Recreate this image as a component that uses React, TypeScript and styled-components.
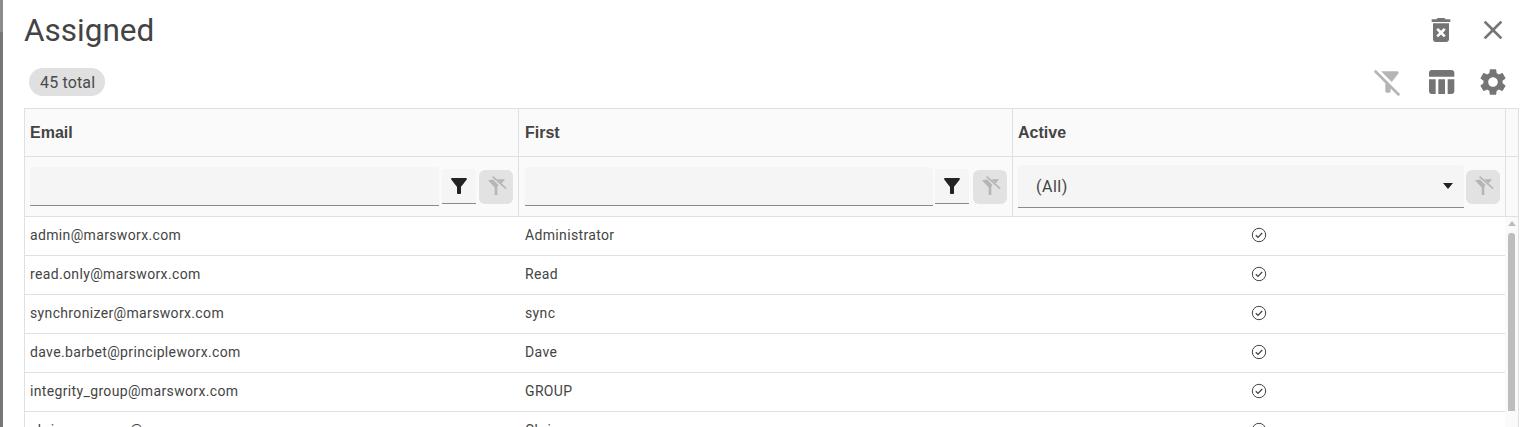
import { createGlobalStyle, styled } from 'styled-components'

const GlobalStyle = createGlobalStyle`
  html, body {
    margin: 0;
    padding: 0;
    height: 427px;
    overflow: hidden;
    background: #fff;
    font-family: Roboto, "Liberation Sans", sans-serif;
  }
`

const Backdrop = styled.div`
  height: 427px;
  padding: 0 27px 0 24px;
  overflow: hidden;
  box-sizing: border-box;
  background: linear-gradient(#8d8d8d 32px, #777 32px) left top / 3px 100% no-repeat, #fff;
`

const TitleRow = styled.div`
  display: flex;
  align-items: center;
  justify-content: space-between;
  height: 60px;
`

const Title = styled.h1`
  margin: 0;
  font-size: 31.5px;
  font-weight: 400;
  color: #444;
`

const ToolRow = styled.div`
  display: flex;
  align-items: center;
  justify-content: space-between;
  height: 48px;
  padding: 0 0 4px 5px;
  box-sizing: border-box;
`

const Chip = styled.span`
  display: inline-flex;
  align-items: center;
  height: 28px;
  padding: 0 10px 0 11px;
  border-radius: 14px;
  background: #e0e0e0;
  color: #4a4a4a;
  font-size: 16px;
  letter-spacing: 0.15px;
`

const Icons = styled.div`
  display: flex;
  align-items: center;
  gap: 20.5px;
`

const Icon = styled.svg<{ $size?: number; $color?: string }>`
  display: block;
  width: ${p => p.$size ?? 32}px;
  height: ${p => p.$size ?? 32}px;
  fill: ${p => p.$color ?? '#757575'};
`

const Table = styled.div`
  border: 1px solid #e0e0e0;
  border-bottom: 0;
  width: 1495px;
  box-sizing: border-box;
`

const Row = styled.div`
  display: grid;
  grid-template-columns: 494px 494px 493px 1fr;
`

const HeadCell = styled.div`
  height: 47px;
  display: flex;
  align-items: center;
  padding-left: 5px;
  background: #fafafa;
  border-right: 1px solid #e0e0e0;
  border-bottom: 1px solid #e0e0e0;
  font-size: 16px;
  font-weight: 700;
  color: #444;
  font-family: "Liberation Sans", Arial, sans-serif;

  &:nth-child(2) {
    padding-left: 6px;
  }
`

const Input = styled.div`
  flex: 1;
  height: 38px;
  background: #f5f5f5;
  border-bottom: 1px solid #8a8a8a;
  border-radius: 4px 4px 0 0;
`

const FilterButton = styled.div`
  width: 34px;
  height: 34px;
  display: flex;
  align-items: center;
  justify-content: center;
  background: #f5f5f5;
  border-bottom: 1px solid #8a8a8a;
  border-radius: 4px 4px 0 0;
`

const ClearButton = styled.div`
  width: 34px;
  height: 34px;
  display: flex;
  align-items: center;
  justify-content: center;
  background: #e2e2e2;
  border-radius: 6px;
`

const FilterCell = styled.div`
  height: 59px;
  display: flex;
  align-items: center;
  gap: 3px;
  padding: 0 5px;
  background: #fafafa;
  border-right: 1px solid #e0e0e0;
  border-bottom: 1px solid #e0e0e0;

  &:nth-child(2) {
    padding-left: 6px;
  }

  &:nth-child(2) ${FilterButton} {
    margin: 0 1px 0 -1px;
  }
`

const Gutter = styled.div<{ $h: number }>`
  height: ${p => p.$h}px;
  background: #fafafa;
  border-bottom: 1px solid #e0e0e0;
`

const Select = styled.div`
  flex: 1;
  height: 42px;
  display: flex;
  align-items: center;
  justify-content: space-between;
  margin-right: -1px;
  padding: 0 11px 0 18px;
  background: #f5f5f5;
  border-bottom: 1px solid #8a8a8a;
  border-radius: 4px 4px 0 0;
  font-size: 16px;
  letter-spacing: 0.5px;
  color: #444;
`

const Caret = styled.span`
  width: 0;
  height: 0;
  border-left: 5px solid transparent;
  border-right: 5px solid transparent;
  border-top: 6px solid #222;
`

const Body = styled.div`
  display: grid;
  grid-template-columns: 1480px 1fr;
`

const DataRow = styled.div`
  display: grid;
  grid-template-columns: 494px 494px 492px;
  height: 36px;
  padding-bottom: 2px;
  border-bottom: 1px solid #e0e0e0;
  align-items: center;
  font-size: 14px;
  color: #444;
  letter-spacing: 0.35px;
`

const DataCell = styled.div`
  padding-left: 5px;

  &:nth-child(2) {
    padding-left: 6px;
  }
`

const StatusCell = styled.div`
  display: flex;
  justify-content: center;
`

const Track = styled.div`
  background: #fafafa;
  display: flex;
  flex-direction: column;
  align-items: center;
  padding-top: 4px;
`

const ArrowUp = styled.span`
  width: 0;
  height: 0;
  border-left: 4px solid transparent;
  border-right: 4px solid transparent;
  border-bottom: 5px solid #bdbdbd;
`

const Thumb = styled.div`
  width: 7px;
  height: 178px;
  margin-top: 7px;
  background: #bdbdbd;
  border-radius: 3px 3px 0 0;
`

const filterOff =
  'M19.79 5.61C20.3 4.95 19.83 4 19 4H6.83l7.97 7.97 4.99-6.36zM2.81 2.81 1.39 4.22 10 13v6c0 .55.45 1 1 1h2c.55 0 1-.45 1-1v-2.17l5.78 5.78 1.41-1.41L2.81 2.81z'
const filterOn =
  'M4.25 5.61C6.27 8.2 10 13 10 13v6c0 .55.45 1 1 1h2c.55 0 1-.45 1-1v-6s3.72-4.8 5.74-7.39c.51-.66.04-1.61-.79-1.61H5.04c-.83 0-1.3.95-.79 1.61z'

const ClearIcon = () => (
  <svg width="24" height="24" viewBox="0 0 24 24" fill="#b5b5b5">
    <path d="M4 5.2l5-.7 5.5 5.5-1.2 1.6V20h-2.6v-7.6z" />
    <path d="M13.2 4.2H21l-3.4 4.4z" />
    <path d="M8.6 1.6l13.6 12" stroke="#b5b5b5" strokeWidth="1.5" fill="none" />
  </svg>
)

const FilterButtonIcon = () => (
  <Icon viewBox="0 0 24 24" $size={24} $color="#222">
    <path d={filterOn} />
  </Icon>
)

const CheckCircle = () => (
  <svg width="16" height="16" viewBox="0 0 16 16" fill="none" stroke="#444" strokeWidth="1">
    <circle cx="8" cy="8" r="6.7" />
    <path d="M4.8 8.2l2.2 2.2 4.2-4.4" strokeWidth="1.3" />
  </svg>
)

const rows = [
  ['admin@marsworx.com', 'Administrator'],
  ['read.only@marsworx.com', 'Read'],
  ['synchronizer@marsworx.com', 'sync'],
  ['dave.barbet@principleworx.com', 'Dave'],
  ['integrity_group@marsworx.com', 'GROUP'],
  ['chris.mcgowan@marsworx.com', 'Chris'],
]

export default function App() {
  return (
    <>
      <GlobalStyle />
      <Backdrop>
        <TitleRow>
          <Title>Assigned</Title>
          <Icons>
            <Icon viewBox="0 0 24 24">
              <path d="M6 19c0 1.1.9 2 2 2h8c1.1 0 2-.9 2-2V7H6v12zm2.46-7.12l1.41-1.41L12 12.59l2.12-2.12 1.41 1.41L13.41 14l2.12 2.12-1.41 1.41L12 15.41l-2.12 2.12-1.41-1.41L10.59 14l-2.13-2.12zM15.5 4l-1-1h-5l-1 1H5v2h14V4z" />
            </Icon>
            <Icon viewBox="0 0 24 24">
              <path d="M19 6.41L17.59 5 12 10.59 6.41 5 5 6.41 10.59 12 5 17.59 6.41 19 12 13.41 17.59 19 19 17.59 13.41 12z" />
            </Icon>
          </Icons>
        </TitleRow>
        <ToolRow>
          <Chip>45 total</Chip>
          <Icons>
            <Icon viewBox="0 0 24 24" $color="#b5b5b5">
              <path d={filterOff} />
            </Icon>
            <Icon viewBox="0 0 24 24">
              <path d="M10 10.02h5V21h-5zM17 21h3c1.1 0 2-.9 2-2v-9h-5v11zm3-18H5c-1.1 0-2 .9-2 2v3h19V5c0-1.1-.9-2-2-2zM3 19c0 1.1.9 2 2 2h3V10H3v9z" />
            </Icon>
            <Icon viewBox="0 0 24 24">
              <path d="M19.14,12.94c0.04-0.3,0.06-0.61,0.06-0.94c0-0.32-0.02-0.64-0.07-0.94l2.03-1.58c0.18-0.14,0.23-0.41,0.12-0.61 l-1.92-3.32c-0.12-0.22-0.37-0.29-0.59-0.22l-2.39,0.96c-0.5-0.38-1.03-0.7-1.62-0.94L14.4,2.81c-0.04-0.24-0.24-0.41-0.48-0.41 h-3.84c-0.24,0-0.43,0.17-0.47,0.41L9.25,5.35C8.66,5.59,8.12,5.92,7.63,6.29L5.24,5.33c-0.22-0.08-0.47,0-0.59,0.22L2.74,8.87 C2.62,9.08,2.66,9.34,2.86,9.48l2.03,1.58C4.84,11.36,4.8,11.69,4.8,12s0.02,0.64,0.07,0.94l-2.03,1.58 c-0.18,0.14-0.23,0.41-0.12,0.61l1.92,3.32c0.12,0.22,0.37,0.29,0.59,0.22l2.39-0.96c0.5,0.38,1.03,0.7,1.62,0.94l0.36,2.54 c0.05,0.24,0.24,0.41,0.48,0.41h3.84c0.24,0,0.44-0.17,0.47-0.41l0.36-2.54c0.59-0.24,1.13-0.56,1.62-0.94l2.39,0.96 c0.22,0.08,0.47,0,0.59-0.22l1.92-3.32c0.12-0.22,0.07-0.47-0.12-0.61L19.14,12.94z M12,15.6c-1.98,0-3.6-1.62-3.6-3.6 s1.62-3.6,3.6-3.6s3.6,1.62,3.6,3.6S13.98,15.6,12,15.6z" />
            </Icon>
          </Icons>
        </ToolRow>
        <Table>
          <Row>
            <HeadCell>Email</HeadCell>
            <HeadCell>First</HeadCell>
            <HeadCell>Active</HeadCell>
            <Gutter $h={47} />
          </Row>
          <Row>
            <FilterCell>
              <Input />
              <FilterButton>
                <FilterButtonIcon />
              </FilterButton>
              <ClearButton>
                <ClearIcon />
              </ClearButton>
            </FilterCell>
            <FilterCell>
              <Input />
              <FilterButton>
                <FilterButtonIcon />
              </FilterButton>
              <ClearButton>
                <ClearIcon />
              </ClearButton>
            </FilterCell>
            <FilterCell>
              <Select>
                (All)
                <Caret />
              </Select>
              <ClearButton>
                <ClearIcon />
              </ClearButton>
            </FilterCell>
            <Gutter $h={59} />
          </Row>
          <Body>
            <div>
              {rows.map(r => (
                <DataRow key={r[0]}>
                  <DataCell>{r[0]}</DataCell>
                  <DataCell>{r[1]}</DataCell>
                  <StatusCell>
                    <CheckCircle />
                  </StatusCell>
                </DataRow>
              ))}
            </div>
            <Track>
              <ArrowUp />
              <Thumb />
            </Track>
          </Body>
        </Table>
      </Backdrop>
    </>
  )
}
